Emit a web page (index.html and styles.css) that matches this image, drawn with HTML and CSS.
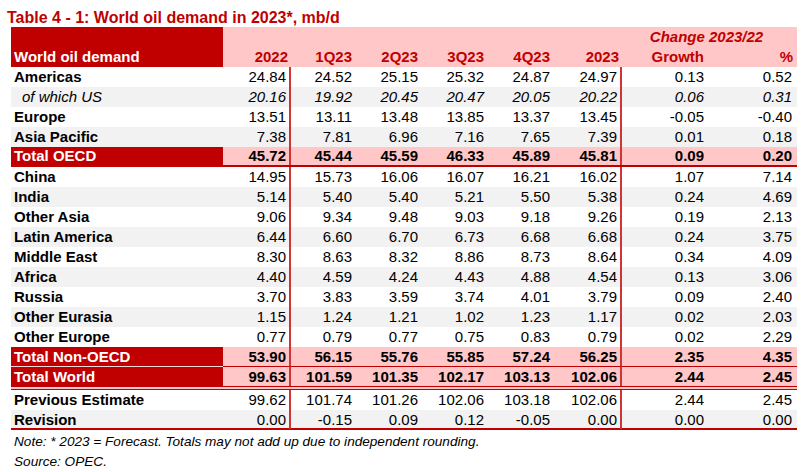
FILE: index.html
```html
<!DOCTYPE html>
<html>
<head>
<meta charset="utf-8">
<link rel="stylesheet" href="styles.css">
</head>
<body>
<div class="page">
  <div class="title">Table 4 - 1: World oil demand in 2023*, mb/d</div>
  <div class="table">
    <div class="head">
      <div class="hlabel">World oil demand</div>
      <div class="hchange">Change 2023/22</div>
      <div class="hc">2022</div>
      <div class="hc">1Q23</div>
      <div class="hc">2Q23</div>
      <div class="hc">3Q23</div>
      <div class="hc">4Q23</div>
      <div class="hc">2023</div>
      <div class="hc">Growth</div>
      <div class="hc pct">%</div>
    </div>
    <div class="row"><div class="lab">Americas</div><div class="c v1">24.84</div><div class="c">24.52</div><div class="c">25.15</div><div class="c">25.32</div><div class="c">24.87</div><div class="c v2">24.97</div><div class="c">0.13</div><div class="c pct">0.52</div></div>
    <div class="row grey ital"><div class="lab sub">of which US</div><div class="c v1">20.16</div><div class="c">19.92</div><div class="c">20.45</div><div class="c">20.47</div><div class="c">20.05</div><div class="c v2">20.22</div><div class="c">0.06</div><div class="c pct">0.31</div></div>
    <div class="row"><div class="lab">Europe</div><div class="c v1">13.51</div><div class="c">13.11</div><div class="c">13.48</div><div class="c">13.85</div><div class="c">13.37</div><div class="c v2">13.45</div><div class="c">-0.05</div><div class="c pct">-0.40</div></div>
    <div class="row grey"><div class="lab">Asia Pacific</div><div class="c v1">7.38</div><div class="c">7.81</div><div class="c">6.96</div><div class="c">7.16</div><div class="c">7.65</div><div class="c v2">7.39</div><div class="c">0.01</div><div class="c pct">0.18</div></div>
    <div class="row total oecd"><div class="lab">Total OECD</div><div class="c v1">45.72</div><div class="c">45.44</div><div class="c">45.59</div><div class="c">46.33</div><div class="c">45.89</div><div class="c v2">45.81</div><div class="c">0.09</div><div class="c pct">0.20</div></div>
    <div class="row"><div class="lab">China</div><div class="c v1">14.95</div><div class="c">15.73</div><div class="c">16.06</div><div class="c">16.07</div><div class="c">16.21</div><div class="c v2">16.02</div><div class="c">1.07</div><div class="c pct">7.14</div></div>
    <div class="row grey"><div class="lab">India</div><div class="c v1">5.14</div><div class="c">5.40</div><div class="c">5.40</div><div class="c">5.21</div><div class="c">5.50</div><div class="c v2">5.38</div><div class="c">0.24</div><div class="c pct">4.69</div></div>
    <div class="row"><div class="lab">Other Asia</div><div class="c v1">9.06</div><div class="c">9.34</div><div class="c">9.48</div><div class="c">9.03</div><div class="c">9.18</div><div class="c v2">9.26</div><div class="c">0.19</div><div class="c pct">2.13</div></div>
    <div class="row grey"><div class="lab">Latin America</div><div class="c v1">6.44</div><div class="c">6.60</div><div class="c">6.70</div><div class="c">6.73</div><div class="c">6.68</div><div class="c v2">6.68</div><div class="c">0.24</div><div class="c pct">3.75</div></div>
    <div class="row"><div class="lab">Middle East</div><div class="c v1">8.30</div><div class="c">8.63</div><div class="c">8.32</div><div class="c">8.86</div><div class="c">8.73</div><div class="c v2">8.64</div><div class="c">0.34</div><div class="c pct">4.09</div></div>
    <div class="row grey"><div class="lab">Africa</div><div class="c v1">4.40</div><div class="c">4.59</div><div class="c">4.24</div><div class="c">4.43</div><div class="c">4.88</div><div class="c v2">4.54</div><div class="c">0.13</div><div class="c pct">3.06</div></div>
    <div class="row"><div class="lab">Russia</div><div class="c v1">3.70</div><div class="c">3.83</div><div class="c">3.59</div><div class="c">3.74</div><div class="c">4.01</div><div class="c v2">3.79</div><div class="c">0.09</div><div class="c pct">2.40</div></div>
    <div class="row grey"><div class="lab">Other Eurasia</div><div class="c v1">1.15</div><div class="c">1.24</div><div class="c">1.21</div><div class="c">1.02</div><div class="c">1.23</div><div class="c v2">1.17</div><div class="c">0.02</div><div class="c pct">2.03</div></div>
    <div class="row"><div class="lab">Other Europe</div><div class="c v1">0.77</div><div class="c">0.79</div><div class="c">0.77</div><div class="c">0.75</div><div class="c">0.83</div><div class="c v2">0.79</div><div class="c">0.02</div><div class="c pct">2.29</div></div>
    <div class="row total nonoecd"><div class="lab">Total Non-OECD</div><div class="c v1">53.90</div><div class="c">56.15</div><div class="c">55.76</div><div class="c">55.85</div><div class="c">57.24</div><div class="c v2">56.25</div><div class="c">2.35</div><div class="c pct">4.35</div></div>
    <div class="row total world"><div class="lab">Total World</div><div class="c v1">99.63</div><div class="c">101.59</div><div class="c">101.35</div><div class="c">102.17</div><div class="c">103.13</div><div class="c v2">102.06</div><div class="c">2.44</div><div class="c pct">2.45</div></div>
    <div class="row"><div class="lab">Previous Estimate</div><div class="c v1">99.62</div><div class="c">101.74</div><div class="c">101.26</div><div class="c">102.06</div><div class="c">103.18</div><div class="c v2">102.06</div><div class="c">2.44</div><div class="c pct">2.45</div></div>
    <div class="row grey last"><div class="lab">Revision</div><div class="c v1">0.00</div><div class="c">-0.15</div><div class="c">0.09</div><div class="c">0.12</div><div class="c">-0.05</div><div class="c v2">0.00</div><div class="c">0.00</div><div class="c pct">0.00</div></div>
  </div>
  <div class="notes">
    <div>Note: * 2023 = Forecast. Totals may not add up due to independent rounding.</div>
    <div>Source: OPEC.</div>
  </div>
</div>
</body>
</html>
```
FILE: styles.css
```css
html, body {
  margin: 0;
  padding: 0;
  background: #ffffff;
}
body {
  font-family: "Liberation Sans", Arial, sans-serif;
  color: #000;
}
.page {
  padding-top: 8px;
  width: 809px;
}
.title {
  padding-left: 7px;
  font-size: 16px;
  font-weight: bold;
  color: #c00000;
  line-height: 19px;
  height: 19px;
  white-space: nowrap;
}
.table {
  margin-left: 11px;
  width: 786px;
  font-size: 15px;
}
.head, .row {
  display: grid;
  grid-template-columns: 212px 68px 64px 66px 66px 66px 69px 85px 90px;
}
.head {
  grid-template-rows: 20px 20px;
  background: #ffc7c7;
}
.hlabel {
  grid-row: 1 / span 2;
  grid-column: 1;
  background: #c00000;
  color: #fff;
  font-weight: bold;
  display: flex;
  align-items: flex-end;
  padding-left: 3px;
  line-height: 20px;
}
.hchange {
  grid-row: 1;
  grid-column: 8 / span 2;
  text-align: center;
  padding-right: 6px;
  color: #c00000;
  font-weight: bold;
  font-style: italic;
  line-height: 20px;
}
.hc {
  grid-row: 2;
  text-align: right;
  padding-right: 3px;
  color: #c00000;
  font-weight: bold;
  line-height: 20px;
}
.hc.pct {
  padding-right: 4px;
}
.row {
  height: 20px;
  box-sizing: border-box;
  line-height: 20px;
}
.row.grey {
  background: #f2f2f2;
}
.lab {
  padding-left: 3px;
  font-weight: bold;
  white-space: nowrap;
}
.lab.sub {
  padding-left: 11px;
  font-weight: normal;
}
.ital {
  font-style: italic;
}
.c {
  text-align: right;
  padding-right: 3px;
  white-space: nowrap;
}
.c.pct {
  padding-right: 5px;
}
.c.v1, .c.v2 {
  border-right: 2px solid #d03434;
}
.row.total {
  background: #ffc7c7;
  font-weight: bold;
}
.row.total .lab {
  background: #c00000;
  color: #fff;
}
.row.oecd {
  border-bottom: 2px solid #c00000;
  line-height: 18px;
}
.row.nonoecd {
  height: 20px;
  line-height: 19px;
}
.row.nonoecd .c {
  border-bottom: 1px solid #c00000;
}
.row.nonoecd .lab {
  border-bottom: 1px solid #f6dada;
}
.row.world {
  height: 23px;
  line-height: 19px;
  border-bottom: 4px double #c00000;
}
.row.last {
  border-bottom: 2px solid #c00000;
  line-height: 19px;
}
.notes {
  padding-left: 14px;
  padding-top: 2px;
  font-size: 13.6px;
  font-style: italic;
  line-height: 20px;
}
```
